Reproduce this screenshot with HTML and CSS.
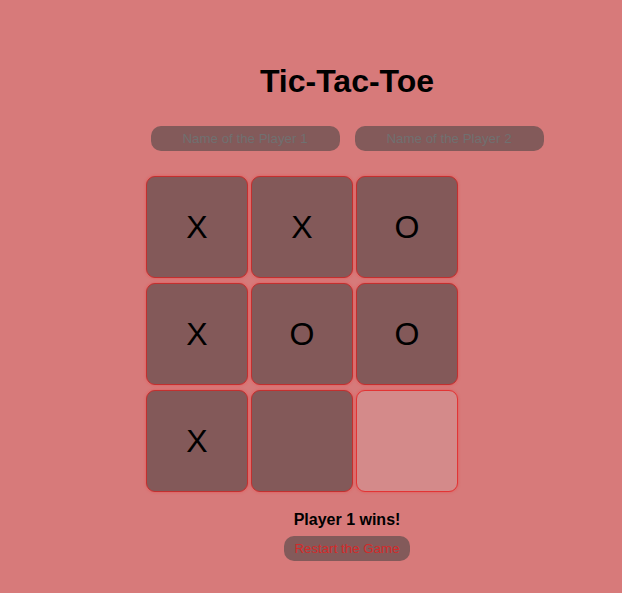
FILE: index.html
```html
<!DOCTYPE html>
<html lang="en">
<head>
<meta charset="utf-8">
<title>Tic-Tac-Toe</title>
<link rel="stylesheet" href="styles.css">
</head>
<body>
<main class="app">
  <h1 class="title">Tic-Tac-Toe</h1>
  <div class="players">
    <input class="player" type="text" placeholder="Name of the Player 1">
    <input class="player" type="text" placeholder="Name of the Player 2">
  </div>
  <div class="board">
    <div class="cell">X</div>
    <div class="cell">X</div>
    <div class="cell">O</div>
    <div class="cell">X</div>
    <div class="cell">O</div>
    <div class="cell">O</div>
    <div class="cell">X</div>
    <div class="cell"></div>
    <div class="cell cell-hover"></div>
  </div>
  <p class="status">Player 1 wins!</p>
  <button class="restart" type="button">Restart the Game</button>
</main>
</body>
</html>
```
FILE: styles.css
```css
html, body {
  margin: 0;
  padding: 0;
}
body {
  background: #d77a7a;
  font-family: "Liberation Sans", Arial, sans-serif;
  color: #000;
  min-height: 593px;
}
.app {
  width: 550px;
  margin-left: 72px;
  display: flex;
  flex-direction: column;
  align-items: center;
}
.title {
  margin: 63px 0 0;
  font-size: 32px;
  line-height: 37px;
  font-weight: bold;
}
.players {
  margin-top: 26px;
  display: flex;
  gap: 15px;
}
.player {
  width: 189px;
  height: 25px;
  box-sizing: border-box;
  border: none;
  border-radius: 10px;
  background: #835a5a;
  font-family: "Liberation Sans", Arial, sans-serif;
  font-size: 13.33px;
  text-align: center;
  color: #000;
  padding: 0 8px;
  outline: none;
}
.player::placeholder {
  color: #707070;
  opacity: 1;
}
.board {
  align-self: flex-start;
  margin-left: 74px;
  margin-top: 25px;
  display: grid;
  grid-template-columns: repeat(3, 102px);
  grid-auto-rows: 102px;
  column-gap: 3px;
  row-gap: 5px;
}
.cell {
  box-sizing: border-box;
  border: 1px solid #c2302f;
  border-radius: 9px;
  background: #835959;
  box-shadow: 0 0 3px rgba(235, 70, 70, 0.7);
  display: flex;
  align-items: center;
  justify-content: center;
  font-size: 32px;
  color: #000;
}
.cell-hover {
  background: #d48a8a;
  border-color: #e23434;
}
.status {
  margin: 19px 0 0;
  font-size: 16px;
  line-height: 18px;
  font-weight: bold;
}
.restart {
  margin-top: 7px;
  height: 25px;
  padding: 0 10px;
  border: none;
  border-radius: 10px;
  background: #835a5a;
  color: #d42a2a;
  font-family: "Liberation Sans", Arial, sans-serif;
  font-size: 13.33px;
}
```
